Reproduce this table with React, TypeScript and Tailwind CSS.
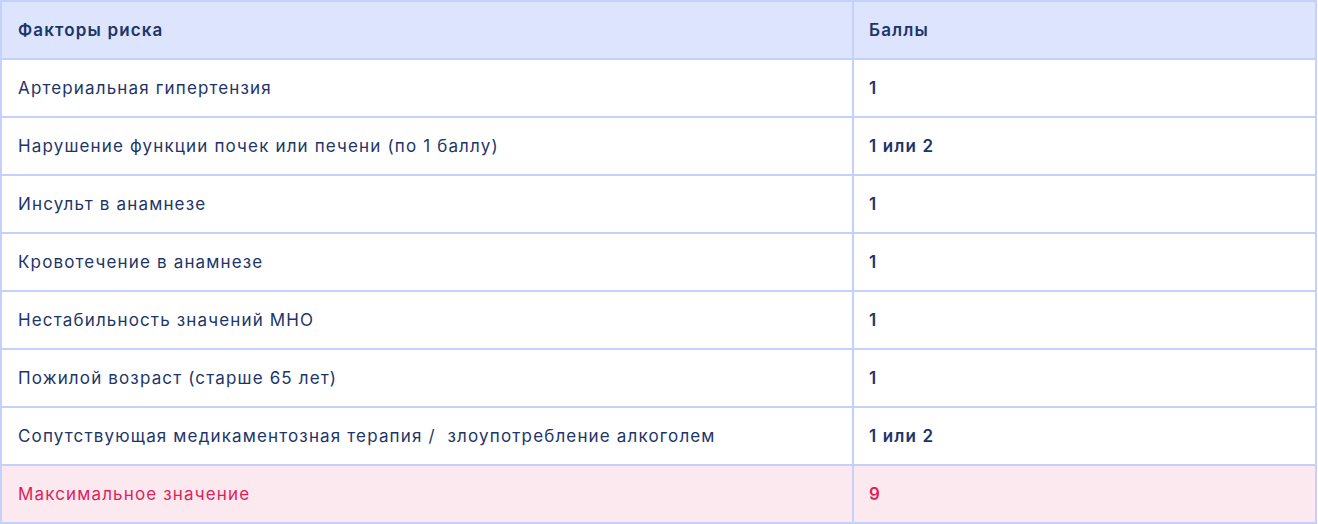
const rows = [
  ["Артериальная гипертензия", "1"],
  ["Нарушение функции почек или печени (по 1 баллу)", "1 или 2"],
  ["Инсульт в анамнезе", "1"],
  ["Кровотечение в анамнезе", "1"],
  ["Нестабильность значений МНО", "1"],
  ["Пожилой возраст (старше 65 лет)", "1"],
  ["Сопутствующая медикаментозная терапия /  злоупотребление алкоголем", "1 или 2"],
];

export default function App() {
  return (
    <div className="w-[1318px] h-[524px] bg-white font-['Inter',sans-serif] text-[17px] tracking-[1.15px] text-[#1d3569]">
      <table className="w-[1317px] border-collapse border-2 border-[#c6d1fb]">
        <thead>
          <tr className="h-[58px] bg-[#dde4fd]">
            <th className="w-[852px] border-2 border-[#c6d1fb] pl-4 pt-[2px] text-left font-semibold">Факторы риска</th>
            <th className="border-2 border-[#c6d1fb] pl-[15px] pt-[2px] text-left font-semibold">Баллы</th>
          </tr>
        </thead>
        <tbody>
          {rows.map(([name, score], i) => (
            <tr key={i} className="h-[58px]">
              <td className="border-2 border-[#c6d1fb] pl-4 pt-[2px] whitespace-pre">{name}</td>
              <td className="border-2 border-[#c6d1fb] pl-[15px] pt-[2px] font-semibold">{score}</td>
            </tr>
          ))}
          <tr className="h-[58px] bg-[#fce8ef] text-[#e01f5a]">
            <td className="border-2 border-[#c6d1fb] pl-4 pt-[2px]">Максимальное значение</td>
            <td className="border-2 border-[#c6d1fb] pl-[15px] pt-[2px] font-semibold">9</td>
          </tr>
        </tbody>
      </table>
    </div>
  );
}
